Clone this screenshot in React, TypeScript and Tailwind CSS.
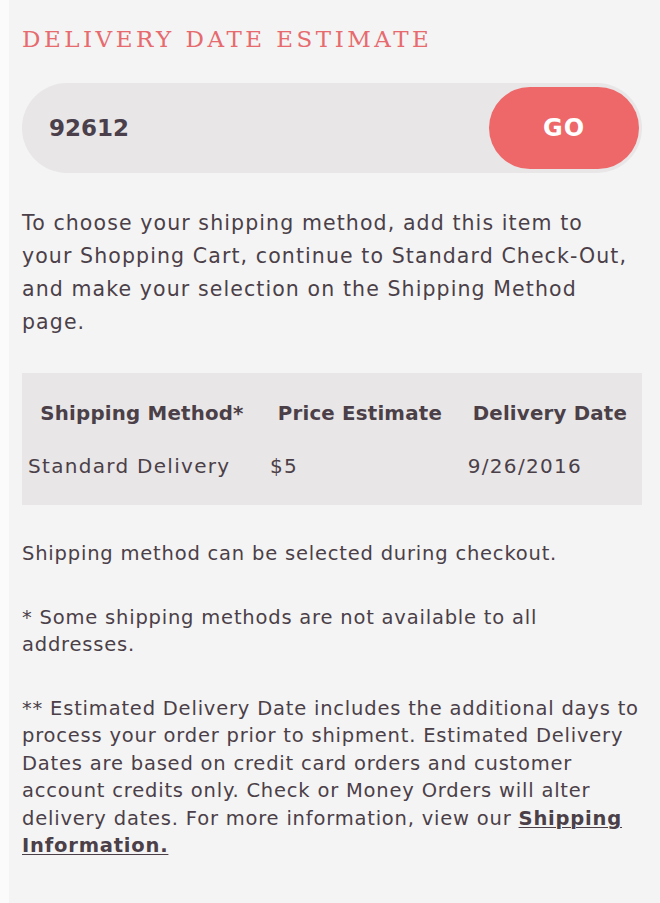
import React from 'react';

const rows = [
  { method: 'Standard Delivery', price: '$5', date: '9/26/2016' },
];

export default function App() {
  return (
    <div className="flex min-h-[903px] w-[660px] bg-[#fafafa] font-['DejaVu_Sans',sans-serif] text-[#4b3f48]">
      <div className="w-[9px] shrink-0 bg-[#fbfbfb]" />
      <div className="flex-1 bg-[#f4f4f4] pl-[13px] pr-[18px] pt-[25px]">
        <h2 className="font-['DejaVu_Serif',serif] text-[23px] leading-[28px] tracking-[3.5px] text-[#e66a6e]">
          DELIVERY DATE ESTIMATE
        </h2>

        <div className="mt-[30px] flex h-[90px] items-center rounded-full bg-[#e8e6e7] pl-[27px] pr-[3px]">
          <span className="flex-1 text-[23px] font-bold text-[#4a3f4a]">92612</span>
          <button className="h-[82px] w-[150px] rounded-full bg-[#ee6769] text-[24px] font-bold tracking-[1px] text-white">
            GO
          </button>
        </div>

        <p className="mt-[34px] pr-[2px] text-[20.5px] leading-[33px] tracking-[1.1px]">
          To choose your shipping method, add this item to your Shopping Cart, continue to Standard
          Check-Out, and make your selection on the Shipping Method page.
        </p>

        <table className="mt-[34px] w-full border-collapse bg-[#e8e6e7]">
          <thead>
            <tr className="text-[19.8px] tracking-[0.2px]">
              <th className="h-[78px] w-[240px] pt-[4px] font-bold">Shipping Method*</th>
              <th className="pt-[4px] font-bold">Price Estimate</th>
              <th className="pt-[4px] font-bold">Delivery Date</th>
            </tr>
          </thead>
          <tbody>
            {rows.map((r) => (
              <tr key={r.method} className="text-[20px] tracking-[1.3px]">
                <td className="h-[54px] pb-[24px] pl-[6px] align-top font-normal">{r.method}</td>
                <td className="pl-[8px] align-top font-normal">{r.price}</td>
                <td className="pl-[10px] align-top font-normal">{r.date}</td>
              </tr>
            ))}
          </tbody>
        </table>

        <div className="mt-[35px] space-y-[36px] text-[19.5px] leading-[27.5px] tracking-[0.8px]">
          <p>Shipping method can be selected during checkout.</p>
          <p>* Some shipping methods are not available to all addresses.</p>
          <p>
            ** Estimated Delivery Date includes the additional days to process your order prior to
            shipment. Estimated Delivery Dates are based on credit card orders and customer account
            credits only. Check or Money Orders will alter delivery dates. For more information, view
            our{' '}
            <a href="#" className="font-bold underline decoration-1 underline-offset-2">
              Shipping Information.
            </a>
          </p>
        </div>
      </div>
    </div>
  );
}
